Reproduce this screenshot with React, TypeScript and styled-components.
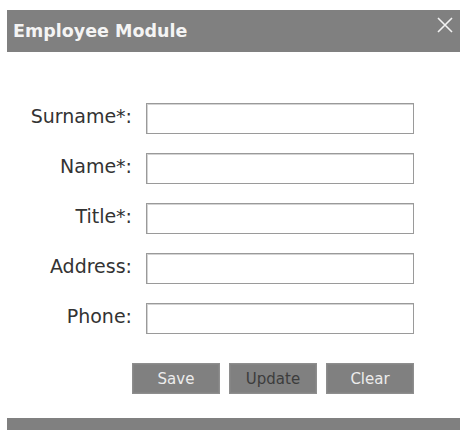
import React from "react";
import styled, { createGlobalStyle } from "styled-components";

const GlobalStyle = createGlobalStyle`
    html, body {
        margin: 0;
        padding: 0;
        background: #ffffff;
        font-family: "DejaVu Sans", Verdana, sans-serif;
    }
`;

/**
 * Dialog styles:
 */
const BAR_GREY = "#808080";

const Dialog = styled.div`
    width: 453px;
    margin: 10px 0 0 7px;
    display: flex;
    flex-direction: column;
`,
    TitleBar = styled.div`
    height: 42px;
    background: ${BAR_GREY};
    display: flex;
    align-items: center;
    justify-content: space-between;
    padding: 0 6px;
    box-sizing: border-box;
`,
    Title = styled.h1`
    margin: 0;
    font-size: 17.5px;
    font-weight: bold;
    color: #f4f4f4;
`,
    CloseButton = styled.button`
    border: none;
    background: none;
    padding: 0;
    margin: -12px 0 0 0;
    width: 18px;
    height: 18px;
    display: flex;
    align-items: center;
    justify-content: center;
    cursor: pointer;
`,
    FooterBar = styled.div`
    height: 12px;
    background: ${BAR_GREY};
    margin-top: 24px;
`;

/**
 * Form styles:
 */
const LABEL_WIDTH = 125;
const INPUT_WIDTH = 268;
const Form = styled.form`
    display: grid;
    grid-template-columns: ${LABEL_WIDTH}px ${INPUT_WIDTH}px;
    column-gap: 14px;
    row-gap: 19px;
    margin-top: 51px;
    align-items: center;
`,
    Label = styled.label`
    justify-self: end;
    font-size: 19px;
    color: #333333;
    white-space: nowrap;
    margin-top: -6px;
`,
    TextInput = styled.input`
    width: ${INPUT_WIDTH}px;
    height: 31px;
    box-sizing: border-box;
    border: 1px solid #9a9a9a;
    box-shadow: inset 1px 1px 0 #d4d4d4;
    background: #ffffff;
    font-family: inherit;
    font-size: 14px;
    padding: 0 6px;
    outline: none;
`,
    ButtonRow = styled.div`
    grid-column: 1 / span 2;
    display: flex;
    justify-content: flex-end;
    gap: 9px;
    margin-top: 10px;
`,
    ActionButton = styled.button<{ $muted?: boolean }>`
    width: 88px;
    height: 31px;
    background: ${BAR_GREY};
    border: 1px solid #8e8e8e;
    box-shadow: inset 0 0 0 1px #858585;
    color: ${(props) => (props.$muted ? "#3c3c3c" : "#ececec")};
    font-family: inherit;
    font-size: 15px;
    cursor: pointer;
    padding: 0;
`;

const CloseIcon = () => (
    <svg width="16" height="16" viewBox="0 0 16 16">
        <path d="M1 1 L15 15 M15 1 L1 15" stroke="#f2f2f2" strokeWidth="1.6" fill="none" />
    </svg>
);

const fields = [
    { id: "surname", label: "Surname*:" },
    { id: "name", label: "Name*:" },
    { id: "title", label: "Title*:" },
    { id: "address", label: "Address:" },
    { id: "phone", label: "Phone:" },
];

export default function App() {
    return (
        <>
            <GlobalStyle />
            <Dialog>
                <TitleBar>
                    <Title>Employee Module</Title>
                    <CloseButton aria-label="Close">
                        <CloseIcon />
                    </CloseButton>
                </TitleBar>
                <Form onSubmit={(e) => e.preventDefault()}>
                    {fields.map((f) => (
                        <React.Fragment key={f.id}>
                            <Label htmlFor={f.id}>{f.label}</Label>
                            <TextInput id={f.id} type="text" />
                        </React.Fragment>
                    ))}
                    <ButtonRow>
                        <ActionButton type="submit">Save</ActionButton>
                        <ActionButton type="button" $muted>Update</ActionButton>
                        <ActionButton type="button">Clear</ActionButton>
                    </ButtonRow>
                </Form>
                <FooterBar />
            </Dialog>
        </>
    );
}
